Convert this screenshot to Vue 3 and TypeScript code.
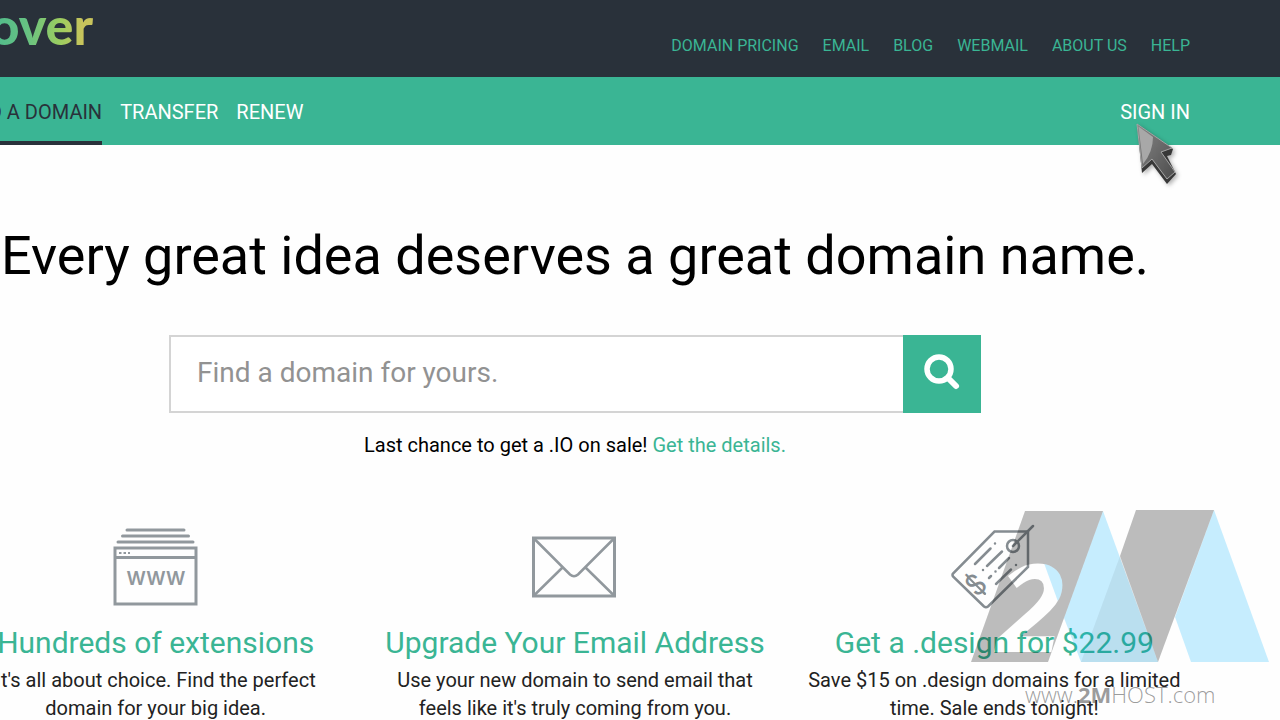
<script setup lang="ts">
const topLinks: string[] = ['DOMAIN PRICING', 'EMAIL', 'BLOG', 'WEBMAIL', 'ABOUT US', 'HELP']
</script>

<template>
  <div class="page">
    <header class="top">
      <div class="wrap top-row">
        <a href="#" class="logo">hover</a>
        <nav class="top-links">
          <a v-for="l in topLinks" :key="l" href="#">{{ l }}</a>
        </nav>
      </div>
    </header>
    <nav class="main-nav">
      <div class="wrap nav-row">
        <a href="#" class="tab active">FIND A DOMAIN</a>
        <a href="#" class="tab">TRANSFER</a>
        <a href="#" class="tab">RENEW</a>
        <a href="#" class="tab sign-in">SIGN IN</a>
      </div>
    </nav>
    <main class="wrap content">
      <h1>Every great idea deserves a great domain name.</h1>
      <form class="search" @submit.prevent>
        <input type="text" aria-label="Find a domain" placeholder="Find a domain for yours." />
        <button type="submit" aria-label="Search">
          <svg width="38" height="38" viewBox="0 0 38 38" fill="none" stroke="#fff">
            <circle cx="16" cy="16" r="12" stroke-width="5.5" />
            <path d="M25 25l8 8" stroke-width="6" stroke-linecap="round" />
          </svg>
        </button>
      </form>
      <p class="promo">Last chance to get a .IO on sale! <a href="#">Get the details</a><span>.</span></p>
      <div class="features">
        <section>
          <svg class="icon" width="86" height="80" viewBox="0 0 86 80" fill="none" stroke="#91989d" stroke-width="3">
            <path d="M14 4h57M9.500 10h66M5 16h75" stroke-linecap="round" />
            <rect x="2" y="22" width="81" height="56" />
            <path d="M2 31.500h81" />
            <path d="M6 27h11" stroke-dasharray="2.500 2" stroke-width="2" />
            <text x="43" y="59" text-anchor="middle" class="www">WWW</text>
          </svg>
          <h2>Hundreds of extensions</h2>
          <p>It's all about choice. Find the perfect<br />domain for your big idea.</p>
        </section>
        <section>
          <svg class="icon" width="86" height="80" viewBox="0 0 86 80" fill="none" stroke="#91989d" stroke-width="3">
            <rect x="1.500" y="12" width="81" height="58" />
            <path d="M2.500 13L38 48.500Q42 52 46 48.500L81.500 13M2.500 69L31 41M81.500 69L53 41" stroke-width="2.500" />
          </svg>
          <h2>Upgrade Your Email Address</h2>
          <p>Use your new domain to send email that<br />feels like it's truly coming from you.</p>
        </section>
        <section>
          <svg class="icon" width="86" height="86" viewBox="0 0 86 86" fill="none" stroke="#858c91" stroke-width="2.500" stroke-linecap="round">
            <path d="M43.500 8.500H77V44L37 83.500Q35 85 33 83.500L2 53.500Q1 52 2 50.500Z" />
            <circle cx="62" cy="23" r="6" />
            <path d="M62 23L82 3" />
            <path d="M24 41L39.500 25.500M44 20.500v0M36 43L51 28.500M32 47v0M38 55l2-2M44.500 48.500v0M48 45L58 35M45 61L60 46.500M65 42v0" />
            <path d="M17 54L34 71" stroke-width="2" />
            <text x="25" y="72" text-anchor="middle" class="dollar" transform="rotate(-45 25 62)">$</text>
          </svg>
          <h2>Get a .design for $22.99</h2>
          <p>Save $15 on .design domains for a limited<br />time. Sale ends tonight!</p>
        </section>
      </div>
    </main>

    <svg class="pointer" width="48" height="66" viewBox="0 0 48 66">
      <defs>
        <linearGradient id="steel" x1="0" y1="0" x2="1" y2="1">
          <stop offset="0" stop-color="#888" /><stop offset="1" stop-color="#4c4c4c" />
        </linearGradient>
      </defs>
      <path class="edge" d="M3 2L8 51L18 42L33 62L42 52L33 34L37 33L39 27Z" />
      <path d="M3 2L38 26L27 30L41 50L33 57L18 37L8 46Z" fill="url(#steel)" stroke="#a5a5a5" stroke-width="1" />
      <path d="M4.500 4.500L19 15Q19 30 9 42Z" fill="#a8a8a8" />
    </svg>

    <div class="watermark">
      <svg width="300" height="152" viewBox="0 0 300 152">
        <defs>
          <mask id="two-out">
            <rect width="300" height="152" fill="#fff" />
            <text x="27" y="142" class="two">2</text>
          </mask>
          <clipPath id="two-in">
            <text x="27" y="142" class="two">2</text>
          </clipPath>
        </defs>
        <g class="sky">
          <path d="M133 1L188 152H111L94 108Z" />
          <path d="M244 0L299 152H221L205 107Z" />
          <path clip-path="url(#two-in)" d="M55 1H133L94 108Z" />
        </g>
        <g class="shade">
          <path mask="url(#two-out)" d="M55 1H133L78 152H1Z" />
          <path d="M166 0H244L188 152L150 46Z" />
        </g>
        <path class="overlap" d="M150 46L188 152H111Z" />
      </svg>
      <span>www.<b>2M</b>HOST.com</span>
    </div>
  </div>
</template>

<style>
html, body { background: #fefefe; }
</style>
<style scoped>
* { box-sizing: border-box; }
.page { position: relative; overflow: hidden; font-family: Roboto, "Liberation Sans", sans-serif; color: #000; }
a { text-decoration: none; color: #3ab594; }
.wrap { margin: 0 90px 0 -40px; }
.top { background: #29313a; height: 77px; }
.top-row { display: flex; justify-content: space-between; align-items: flex-start; }
.logo { font: 900 52px/50px Lato, sans-serif; background: linear-gradient(90deg, #3ab594, #66c283 50%, #9bcd60 75%, #c8c45c 92%); background-clip: text; color: transparent; }
.top-links { display: flex; gap: 24px; font-size: 16px; line-height: 20px; padding-top: 36px; }
.main-nav { background: #3ab594; }
.nav-row { display: flex; gap: 18px; margin-left: -42px; }
.tab { color: #fff; font-size: 20px; line-height: 24px; padding: 23px 0 17px; border-bottom: 4px solid transparent; white-space: nowrap; }
.active { color: #29313a; border-color: #29313a; }
.sign-in { margin-left: auto; }
.content { text-align: center; }
h1 { font-weight: 400; font-size: 54px; line-height: 64px; margin: 79px 0 47px; white-space: nowrap; }
.search { display: flex; width: 812px; margin: 0 auto; height: 78px; }
.search input { flex: 1; border: 2px solid #d4d4d4; border-right: 0; padding: 0 26px 4px; font: 28px Roboto, sans-serif; background: #fff; outline: 0; }
.search input::placeholder { color: #929292; opacity: 1; }
.search button { width: 78px; border: 0; padding: 0 0 4px; background: #3ab594; display: grid; place-items: center; }
.promo { font-size: 20px; line-height: 24px; margin: 20px 0 66px; }
.promo span { color: #3ab594; }
.features { display: grid; grid-template-columns: repeat(3, minmax(0, 1fr)); gap: 28px; }
.icon { display: block; margin: 0 auto; height: 86px; }
h2 { font-weight: 400; font-size: 30px; line-height: 36px; margin: 16px 0 5px; color: #3ab594; white-space: nowrap; }
section p { font-size: 20px; line-height: 28px; margin: 0; color: #222; white-space: nowrap; }
.www { font: 600 19px Inter, sans-serif; fill: #91989d; stroke: none; }
.dollar { font: 30px Roboto, sans-serif; fill: #858c91; stroke: none; }
.pointer { position: absolute; right: 98px; top: 122px; filter: drop-shadow(2px 2px 2px rgba(0, 0, 0, .3)); }
.edge { fill: #383838; }
.watermark { position: absolute; right: 10px; top: 510px; width: 300px; pointer-events: none; }
.watermark svg { display: block; }
.watermark span { display: block; margin: 18px 0 0 55px; font: 300 22px/28px "Open Sans", sans-serif; color: rgba(90, 90, 90, .6); }
.watermark b { font-weight: 700; }
.sky { fill: #00b3ff; fill-opacity: .22; }
.shade { fill: #000; fill-opacity: .26; }
.overlap { fill: #000; fill-opacity: .06; }
.two { font: italic 700 122px "Open Sans", sans-serif; }
</style>
